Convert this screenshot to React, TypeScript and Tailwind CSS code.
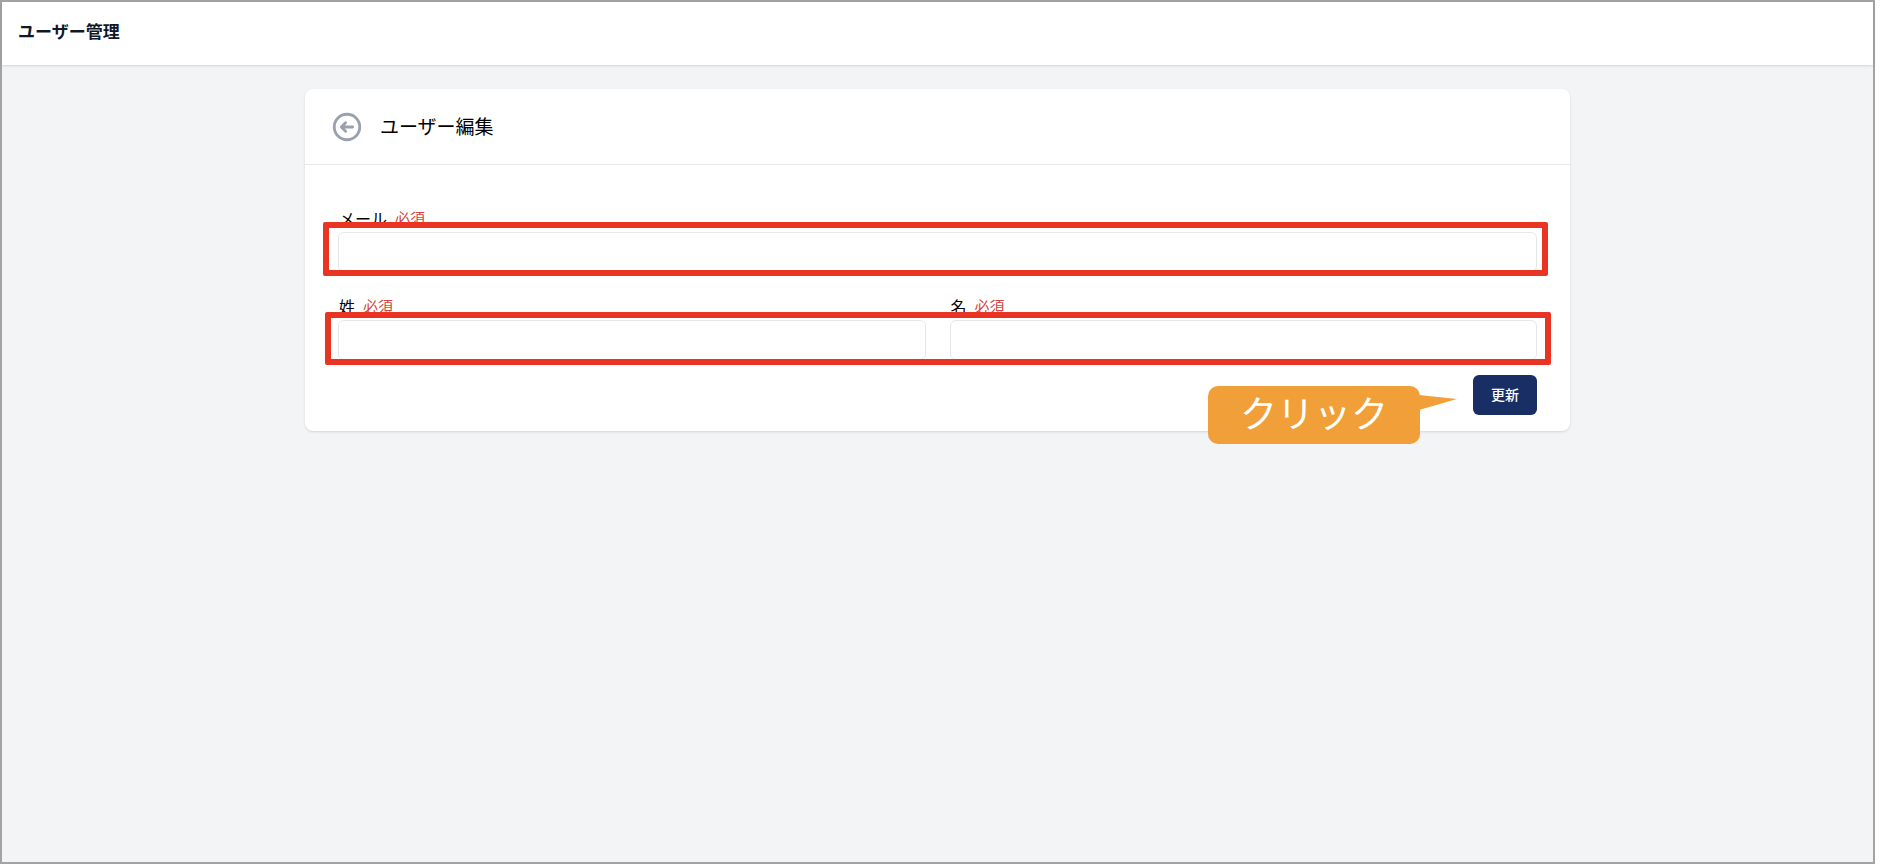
import { useState, type FormEvent } from "react";

const inputClass =
  "block w-full h-10 px-3 bg-white border border-gray-200 rounded-md text-base text-gray-900 focus:outline-none focus:border-gray-400";

function FieldLabel({ id, text }: { id: string; text: string }) {
  return (
    <label htmlFor={id} className="flex items-center h-6 mb-0.5 pl-px gap-2 text-base text-black">
      {text}
      <span className="text-[15px] text-[#d0453f]">必須</span>
    </label>
  );
}

export default function App() {
  const [email, setEmail] = useState("");
  const [lastName, setLastName] = useState("");
  const [firstName, setFirstName] = useState("");

  const handleSubmit = (e: FormEvent) => {
    e.preventDefault();
  };

  return (
    <div className="flex flex-col min-h-screen pr-[5px] pb-[3px] bg-white font-['Noto_Sans_CJK_JP',sans-serif]">
      <div className="flex flex-col grow bg-gray-100 border-2 border-[#a3a3a3]">
        {/* Header */}
        <header className="flex items-center h-[63px] px-4 pb-1.5 bg-white shadow">
          <h1 className="text-[17px] leading-6 font-bold text-gray-900">ユーザー管理</h1>
        </header>

        {/* Card */}
        <main className="w-full max-w-[1265px] mx-auto mt-6 bg-white rounded-lg shadow">
          <div className="flex items-center h-[76px] px-[25px] border-b border-gray-200">
            <button type="button" aria-label="戻る" className="text-gray-400 hover:text-gray-500">
              <svg
                width="34"
                height="34"
                viewBox="0 0 24 24"
                fill="none"
                stroke="currentColor"
                strokeWidth="2"
                strokeLinecap="round"
                strokeLinejoin="round"
              >
                <path d="M11 15l-3-3m0 0l3-3m-3 3h8M3 12a9 9 0 1118 0 9 9 0 01-18 0z" />
              </svg>
            </button>
            <h2 className="ml-4 pb-0.5 text-[19px] leading-7 font-normal text-black">ユーザー編集</h2>
          </div>

          <form onSubmit={handleSubmit} className="px-[33px] pt-[41px] pb-4">
            <div className="relative mb-[22px]">
              <FieldLabel id="email" text="メール" />
              <input
                id="email"
                type="email"
                value={email}
                onChange={(e) => setEmail(e.target.value)}
                className={inputClass}
              />
              <div className="absolute -left-[15px] -right-[11px] -bottom-1 h-[54px] border-6 border-[#e93323] rounded-xs pointer-events-none" />
            </div>

            <div className="relative grid grid-cols-2 gap-6 mb-[15px]">
              <div>
                <FieldLabel id="last-name" text="姓" />
                <input
                  id="last-name"
                  type="text"
                  value={lastName}
                  onChange={(e) => setLastName(e.target.value)}
                  className={inputClass}
                />
              </div>
              <div>
                <FieldLabel id="first-name" text="名" />
                <input
                  id="first-name"
                  type="text"
                  value={firstName}
                  onChange={(e) => setFirstName(e.target.value)}
                  className={inputClass}
                />
              </div>
              <div className="absolute -left-[13px] -right-[14px] -bottom-[5px] h-[53px] border-6 border-[#e93323] rounded-xs pointer-events-none" />
            </div>

            <div className="relative flex justify-end">
              <button
                type="submit"
                className="w-16 h-10 pb-0.5 bg-[#1a2e66] hover:bg-[#24397a] rounded-md text-sm font-medium text-white"
              >
                更新
              </button>

              {/* Callout */}
              <div className="absolute top-[11px] right-[117px] flex items-center justify-center w-[212px] h-[58px] pb-1.5 bg-[#f19f39] rounded-[10px]">
                <span className="text-[37px] leading-none font-normal text-white">クリック</span>
                <svg
                  width="38"
                  height="16"
                  viewBox="0 0 38 16"
                  className="absolute left-full top-2 -ml-px"
                  aria-hidden="true"
                >
                  <path d="M0 1L38 5L0 16Z" fill="#f19f39" />
                </svg>
              </div>
            </div>
          </form>
        </main>
      </div>
    </div>
  );
}
